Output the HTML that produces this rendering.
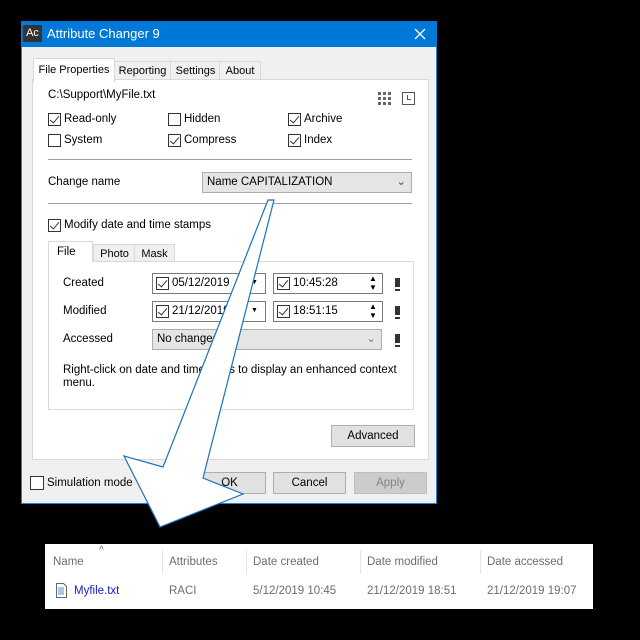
<!DOCTYPE html><html><head><style>
body{margin:0;width:640px;height:640px;background:#000;position:relative;overflow:hidden;font-family:"Liberation Sans",sans-serif;font-size:11.5px;color:#000}
.a{position:absolute;white-space:nowrap}
.cb{position:absolute;width:11px;height:11px;border:1px solid #333;background:#fff}
.cb.c::after{content:"";position:absolute;left:3px;top:0px;width:4px;height:8px;border:solid #333;border-width:0 1.3px 1.3px 0;transform:rotate(40deg)}
.btn{position:absolute;background:#e1e1e1;border:1px solid #adadad;text-align:center;line-height:20px}
.box{position:absolute;background:#fff;border:1px solid #7a7a7a}
.tab{position:absolute;background:#f0f0f0;border:1px solid #d9d9d9;border-bottom:none;text-align:center;font-size:11px}
.g{color:#6d6d6d}
</style></head><body>
<div class="a" style="left:21px;top:21px;width:416px;height:483px;background:#f0f0f0;border:1px solid #1883d7;box-sizing:border-box"></div>
<div class="a" style="left:21px;top:21px;width:416px;height:26px;background:#0078d7"></div>
<div class="a" style="left:23px;top:25px;width:19px;height:17px;background:#333;color:#fff;font-size:11px;line-height:17px;text-align:center">Ac</div>
<div class="a" style="left:47px;top:26px;color:#fff;font-size:13px">Attribute Changer 9</div>
<svg class="a" style="left:414px;top:28px" width="12" height="12"><path d="M1 1L11 11M11 1L1 11" stroke="#fff" stroke-width="1.3"/></svg>
<!-- tabs -->
<div class="tab" style="left:113px;top:61px;width:57px;height:19px;line-height:19px">Reporting</div>
<div class="tab" style="left:170px;top:61px;width:49px;height:19px;line-height:19px">Settings</div>
<div class="tab" style="left:219px;top:61px;width:40px;height:19px;line-height:19px">About</div>
<div class="a" style="left:32px;top:79px;width:397px;height:381px;background:#fff;border:1px solid #d9d9d9;box-sizing:border-box"></div>
<div class="a" style="left:33px;top:58px;width:80px;height:23px;background:#fff;border:1px solid #d9d9d9;border-bottom:none;text-align:center;line-height:22px;font-size:11px">File Properties</div>
<div class="a" style="left:48px;top:89px">C:\Support\MyFile.txt</div>
<div class="a" style="left:378px;top:92px;width:13px;height:13px;background:repeating-linear-gradient(90deg,#666 0 3px,transparent 3px 5px);-webkit-mask:repeating-linear-gradient(0deg,#000 0 3px,transparent 3px 5px)"></div>
<div class="a" style="left:402px;top:92px;width:11px;height:11px;border:1.5px solid #555"></div>
<div class="a" style="left:407px;top:95px;width:3px;height:4px;border-left:1.5px solid #555;border-bottom:1.5px solid #555"></div>
<div class="cb c" style="left:48px;top:113px"></div><div class="a" style="left:64px;top:113px">Read-only</div>
<div class="cb" style="left:168px;top:113px"></div><div class="a" style="left:184px;top:113px">Hidden</div>
<div class="cb c" style="left:288px;top:113px"></div><div class="a" style="left:304px;top:113px">Archive</div>
<div class="cb" style="left:48px;top:134px"></div><div class="a" style="left:64px;top:134px">System</div>
<div class="cb c" style="left:168px;top:134px"></div><div class="a" style="left:184px;top:134px">Compress</div>
<div class="cb c" style="left:288px;top:134px"></div><div class="a" style="left:304px;top:134px">Index</div>
<div class="a" style="left:48px;top:159px;width:364px;height:1px;background:#a0a0a0"></div>
<div class="a" style="left:48px;top:176px">Change name</div>
<div class="a" style="left:202px;top:172px;width:210px;height:21px;background:#e5e5e5;border:1px solid #adadad;box-sizing:border-box;line-height:19px;padding-left:4px">Name CAPITALIZATION<span style="position:absolute;right:5px;color:#555">⌄</span></div>
<div class="a" style="left:48px;top:203px;width:364px;height:1px;background:#a0a0a0"></div>
<div class="cb c" style="left:48px;top:219px"></div><div class="a" style="left:64px;top:219px">Modify date and time stamps</div>
<!-- inner tabs -->
<div class="tab" style="left:93px;top:244px;width:41px;height:18px;line-height:18px">Photo</div>
<div class="tab" style="left:134px;top:244px;width:39px;height:18px;line-height:18px">Mask</div>
<div class="a" style="left:48px;top:261px;width:366px;height:149px;background:#fff;border:1px solid #d9d9d9;box-sizing:border-box"></div>
<div class="a" style="left:48px;top:241px;width:45px;height:21px;background:#fff;border:1px solid #d9d9d9;border-bottom:none;line-height:20px;padding-left:8px;box-sizing:border-box">File</div>
<div class="a" style="left:63px;top:277px">Created</div>
<div class="a" style="left:63px;top:305px">Modified</div>
<div class="a" style="left:63px;top:333px">Accessed</div>
<div class="box" style="left:152px;top:273px;width:112px;height:19px"></div>
<div class="cb c" style="left:156px;top:277px"></div><div class="a" style="left:172px;top:277px">05/12/2019</div><div class="a" style="left:251px;top:279px;font-size:7px">▼</div>
<div class="box" style="left:273px;top:273px;width:108px;height:19px"></div>
<div class="cb c" style="left:277px;top:277px"></div><div class="a" style="left:293px;top:277px">10:45:28</div><div class="a" style="left:369px;top:274px;font-size:8px;line-height:9px">▲<br>▼</div>
<div class="box" style="left:152px;top:301px;width:112px;height:19px"></div>
<div class="cb c" style="left:156px;top:305px"></div><div class="a" style="left:172px;top:305px">21/12/2019</div><div class="a" style="left:251px;top:307px;font-size:7px">▼</div>
<div class="box" style="left:273px;top:301px;width:108px;height:19px"></div>
<div class="cb c" style="left:277px;top:305px"></div><div class="a" style="left:293px;top:305px">18:51:15</div><div class="a" style="left:369px;top:302px;font-size:8px;line-height:9px">▲<br>▼</div>
<div class="a" style="left:152px;top:329px;width:230px;height:21px;background:#e5e5e5;border:1px solid #adadad;box-sizing:border-box;line-height:19px;padding-left:4px">No changes<span style="position:absolute;right:5px;color:#777">⌄</span></div>
<div class="a" style="left:395px;top:278px;width:5px;height:9px;background:#333;border-bottom:2px solid #fff;box-shadow:0 2px 0 #333"></div>
<div class="a" style="left:395px;top:306px;width:5px;height:9px;background:#333;border-bottom:2px solid #fff;box-shadow:0 2px 0 #333"></div>
<div class="a" style="left:395px;top:334px;width:5px;height:9px;background:#333;border-bottom:2px solid #fff;box-shadow:0 2px 0 #333"></div>
<div class="a" style="left:63px;top:364px;line-height:13px">Right-click on date and time fields to display an enhanced context<br>menu.</div>
<div class="btn" style="left:331px;top:425px;width:82px;height:20px">Advanced</div>
<div class="cb" style="left:30px;top:476px;width:12px;height:12px"></div><div class="a" style="left:47px;top:477px">Simulation mode</div>
<div class="btn" style="left:193px;top:472px;width:71px;height:20px">OK</div>
<div class="btn" style="left:273px;top:472px;width:71px;height:20px">Cancel</div>
<div class="btn" style="left:354px;top:472px;width:71px;height:20px;background:#ccc;border-color:#bfbfbf;color:#838383">Apply</div>
<!-- explorer -->
<div class="a" style="left:45px;top:544px;width:548px;height:65px;background:#fff"></div>
<div class="a" style="left:99px;top:545px;font-size:10px;color:#666">^</div>
<div class="a g" style="left:53px;top:556px">Name</div>
<div class="a g" style="left:169px;top:556px">Attributes</div>
<div class="a g" style="left:253px;top:556px">Date created</div>
<div class="a g" style="left:367px;top:556px">Date modified</div>
<div class="a g" style="left:487px;top:556px">Date accessed</div>
<div class="a" style="left:162px;top:550px;width:1px;height:24px;background:#e5e5e5"></div>
<div class="a" style="left:246px;top:550px;width:1px;height:24px;background:#e5e5e5"></div>
<div class="a" style="left:360px;top:550px;width:1px;height:24px;background:#e5e5e5"></div>
<div class="a" style="left:480px;top:550px;width:1px;height:24px;background:#e5e5e5"></div>
<svg class="a" style="left:55px;top:583px" width="13" height="16"><path d="M1.5 .5h7l3 3v11h-10z" fill="#fff" stroke="#666"/><path d="M3 5h6M3 7h6M3 9h6M3 11h6" stroke="#5b8fd0"/></svg>
<div class="a" style="left:74px;top:585px;color:#1a1acc">Myfile.txt</div>
<div class="a g" style="left:169px;top:585px">RACI</div>
<div class="a g" style="left:253px;top:585px">5/12/2019 10:45</div>
<div class="a g" style="left:367px;top:585px">21/12/2019 18:51</div>
<div class="a g" style="left:487px;top:585px">21/12/2019 19:07</div>
<!-- arrow -->
<svg class="a" style="left:0;top:0" width="640" height="640"><path d="M268 200 L274 200 L203 478 L243 494 L160 527 L124 456 L163 467 Z" fill="#fff" stroke="#1e70b8" stroke-width="1.2" stroke-linejoin="miter"/></svg>
</body></html>
